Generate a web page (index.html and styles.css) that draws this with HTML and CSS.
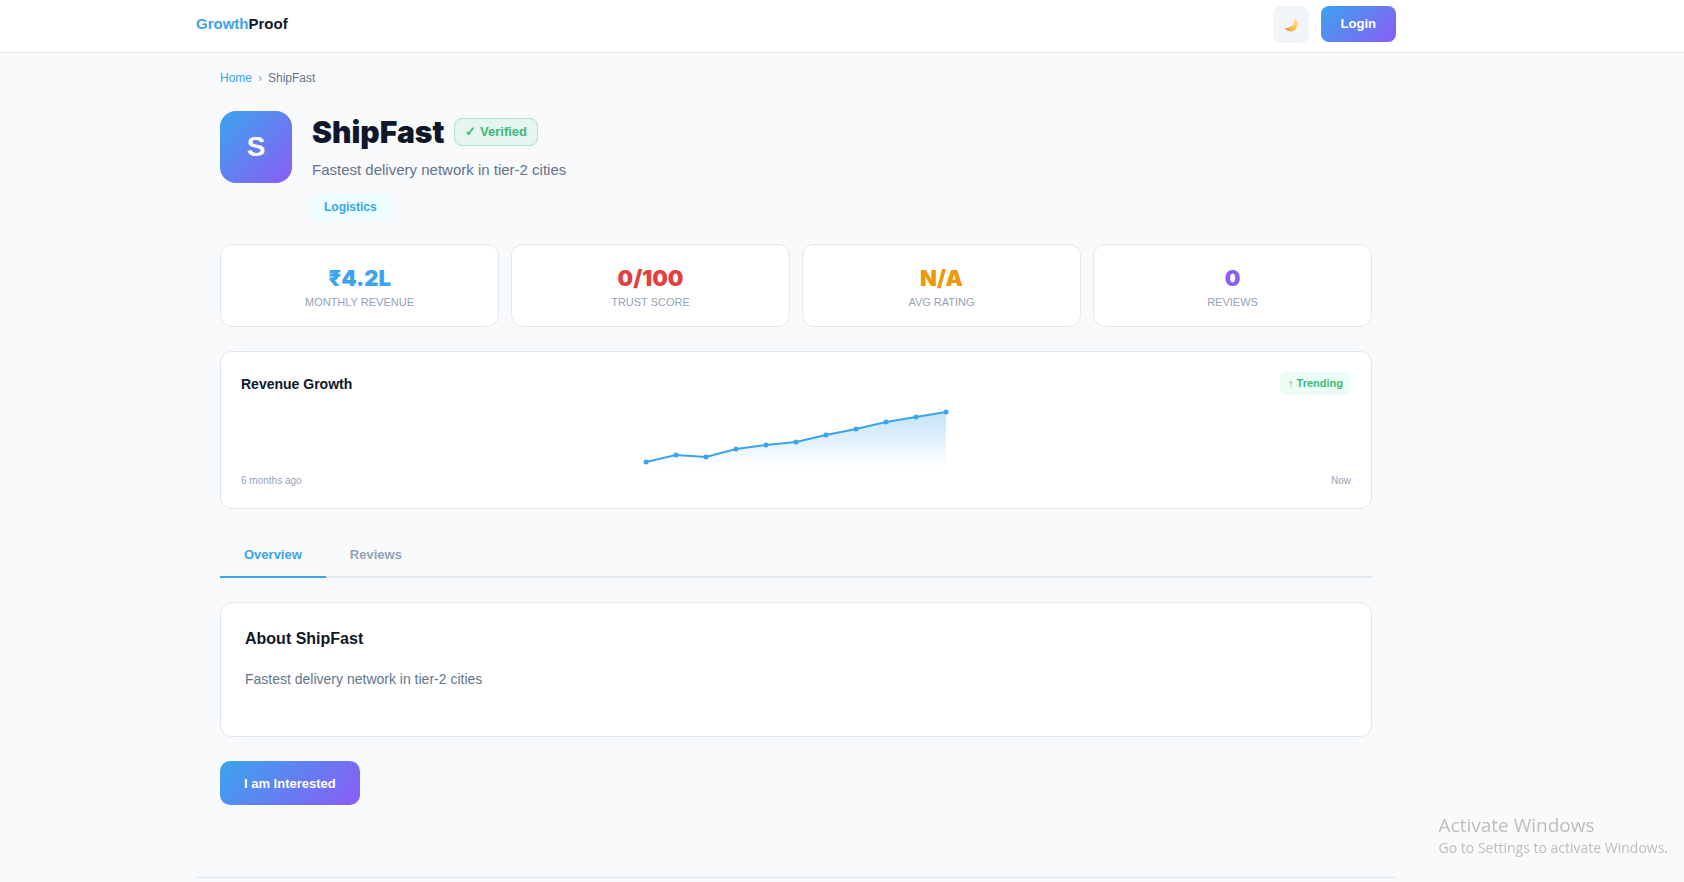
FILE: index.html
```html
<!DOCTYPE html>
<html lang="en">
<head>
<meta charset="utf-8">
<meta name="viewport" content="width=device-width, initial-scale=1">
<title>ShipFast – GrowthProof</title>
<link rel="stylesheet" href="styles.css">
</head>
<body>
<header class="topbar">
  <div class="topbar-inner">
    <a class="brand" href="#"><span class="brand-accent">Growth</span>Proof</a>
    <div class="topbar-actions">
      <button class="theme-toggle" type="button" aria-label="Toggle dark mode">
        <svg class="moon" viewBox="0 0 14 14" aria-hidden="true">
          <defs>
            <linearGradient id="moonFill" x1="1" y1="0" x2="0" y2="1">
              <stop offset="0" stop-color="#fbe0a0"/>
              <stop offset="0.5" stop-color="#f9c54e"/>
              <stop offset="1" stop-color="#e8883a"/>
            </linearGradient>
          </defs>
          <path d="M10.3 0.6C12.4 1.6 13.6 3.6 13.6 6.2C13.6 10.4 10.6 13.4 6.6 13.4C4 13.4 1.7 12.2 0.5 9.6C2 10.1 3.6 10 5.4 9.300C8.400 8.200 10.300 5.800 10.500 2.800C10.600 2 10.500 1.200 10.300 0.600Z" fill="url(#moonFill)"/>
        </svg>
      </button>
      <button class="btn btn-login" type="button">Login</button>
    </div>
  </div>
</header>

<main class="page">
  <nav class="breadcrumb" aria-label="Breadcrumb">
    <a href="#">Home</a><span class="sep">›</span><span>ShipFast</span>
  </nav>

  <section class="profile">
    <div class="avatar">S</div>
    <div class="profile-body">
      <div class="title-row">
        <h1>ShipFast</h1>
        <span class="verified">✓ Verified</span>
      </div>
      <p class="tagline">Fastest delivery network in tier-2 cities</p>
      <span class="category">Logistics</span>
    </div>
  </section>

  <section class="stats">
    <div class="card stat"><div class="value blue">₹4.2L</div><div class="label">Monthly Revenue</div></div>
    <div class="card stat"><div class="value red">0/100</div><div class="label">Trust Score</div></div>
    <div class="card stat"><div class="value amber">N/A</div><div class="label">Avg Rating</div></div>
    <div class="card stat"><div class="value violet">0</div><div class="label">Reviews</div></div>
  </section>

  <section class="card growth">
    <div class="growth-head">
      <h2>Revenue Growth</h2>
      <span class="trend">↑ Trending</span>
    </div>
    <svg class="chart" viewBox="0 0 300 60" role="img" aria-label="Revenue growth line chart">
      <defs>
        <linearGradient id="area" x1="0" y1="0" x2="0" y2="1">
          <stop offset="0" stop-color="#3ba4ec" stop-opacity="0.3"/>
          <stop offset="1" stop-color="#3ba4ec" stop-opacity="0"/>
        </linearGradient>
      </defs>
      <polygon fill="url(#area)" points="0,55 30,48 60,50 90,42 120,38 150,35 180,28 210,22 240,15 270,10 300,5 300,60 0,60"/>
      <polyline class="line" points="0,55 30,48 60,50 90,42 120,38 150,35 180,28 210,22 240,15 270,10 300,5"/>
      <g class="dots">
        <circle cx="0" cy="55" r="2.500"/><circle cx="30" cy="48" r="2.500"/><circle cx="60" cy="50" r="2.500"/>
        <circle cx="90" cy="42" r="2.500"/><circle cx="120" cy="38" r="2.500"/><circle cx="150" cy="35" r="2.500"/>
        <circle cx="180" cy="28" r="2.500"/><circle cx="210" cy="22" r="2.500"/><circle cx="240" cy="15" r="2.500"/>
        <circle cx="270" cy="10" r="2.500"/><circle cx="300" cy="5" r="2.500"/>
      </g>
    </svg>
    <div class="axis"><span>6 months ago</span><span>Now</span></div>
  </section>

  <div class="tabs" role="tablist">
    <button class="tab active" type="button" role="tab" aria-selected="true">Overview</button>
    <button class="tab" type="button" role="tab" aria-selected="false">Reviews</button>
  </div>

  <section class="card about">
    <h2>About ShipFast</h2>
    <p>Fastest delivery network in tier-2 cities</p>
  </section>

  <button class="btn btn-interest" type="button">I am Interested</button>
</main>

<footer class="footer"></footer>

<aside class="activation">
  <div class="activation-title">Activate Windows</div>
  <div class="activation-text">Go to Settings to activate Windows.</div>
</aside>
</body>
</html>
```

FILE: styles.css
```css
:root {
  --blue: #3ba4ec;
  --violet: #8b5cf6;
  --ink: #0f172a;
  --slate: #64748b;
  --muted: #94a3b8;
  --line: #e2e8f0;
  --gradient: linear-gradient(135deg, #3ba4ec, #8b5cf6);
  --gutter: 92px;
}

* { box-sizing: border-box; }

body {
  margin: 0;
  min-height: 100vh;
  overflow-x: hidden;
  background: #f9fafc;
  color: var(--ink);
  font-family: "Liberation Sans", Arial, sans-serif;
  font-size: 14px;
}

h1, h2, p { margin: 0; }
a { color: inherit; text-decoration: none; }
button { font-family: inherit; border: 0; cursor: pointer; }

.topbar {
  padding: 6px var(--gutter) 9px 0;
  background: #fff;
  border-bottom: 1px solid var(--line);
}
.topbar-inner {
  display: flex;
  justify-content: space-between;
  align-items: flex-start;
  max-width: 1200px;
  margin: 0 auto;
}
.brand { font-size: 15px; font-weight: 700; line-height: 36px; }
.brand-accent { color: var(--blue); }
.topbar-actions { display: flex; gap: 12px; }

.theme-toggle {
  display: grid;
  place-items: center;
  width: 36px;
  height: 37px;
  padding: 0;
  border-radius: 8px;
  background: #f1f5f9;
}
.moon { width: 14px; height: 14px; }

.btn {
  background: var(--gradient);
  color: #fff;
  font-size: 13px;
  font-weight: 700;
}
.btn-login { height: 36px; padding: 0 20px 2px; border-radius: 8px; }
.btn-interest { height: 44px; margin-top: 24px; padding: 0 24px; border-radius: 10px; }

.page {
  width: calc(100% - var(--gutter));
  max-width: 1292px;
  padding: 16px 24px 72px;
}
@media (min-width: 1292px) {
  .page {
    max-width: 1200px;
    margin-left: calc((100% - var(--gutter) - 1200px) / 2);
  }
}

.breadcrumb {
  display: flex;
  gap: 6px;
  color: var(--slate);
  font-size: 12px;
  line-height: 18px;
}
.breadcrumb a { color: var(--blue); }
.sep { color: var(--muted); }

.profile { display: flex; gap: 20px; margin-top: 24px; }
.avatar {
  display: grid;
  place-items: center;
  flex: none;
  width: 72px;
  height: 72px;
  border-radius: 16px;
  background: var(--gradient);
  color: #fff;
  font-size: 28px;
  font-weight: 700;
}
.title-row { display: flex; align-items: center; gap: 10px; height: 42px; }
h1 {
  font-family: "Arial Black", Inter, sans-serif;
  font-size: 30px;
  font-weight: 900;
  line-height: 42px;
}
.verified {
  padding: 0 10px;
  border: 1px solid #b3e2cb;
  border-radius: 8px;
  background: #e4f4ee;
  color: #3cb97d;
  font-size: 13px;
  font-weight: 700;
  line-height: 26px;
}
.tagline { margin-top: 6px; color: var(--slate); font-size: 15px; line-height: 22px; }
.category {
  display: inline-block;
  margin-top: 13px;
  padding: 0 12px;
  border-radius: 6px;
  background: #ecfeff;
  color: var(--blue);
  font-size: 12px;
  font-weight: 700;
  line-height: 26px;
}

.card { background: #fff; border: 1px solid var(--line); border-radius: 12px; }

.stats {
  display: grid;
  grid-template-columns: repeat(4, 1fr);
  gap: 12px;
  margin-top: 24px;
}
.stat { padding: 18px 16px 16px; text-align: center; }
.value {
  font-family: "Arial Black", Inter, sans-serif;
  font-size: 22px;
  font-weight: 900;
  line-height: 31px;
}
.label { color: var(--muted); font-size: 11px; line-height: 16px; text-transform: uppercase; }
.blue { color: var(--blue); }
.red { color: #e53e3e; }
.amber { color: #ed9a09; }
.violet { color: var(--violet); }

.growth { margin-top: 24px; padding: 20px; }
.growth-head { display: flex; justify-content: space-between; align-items: center; }
.growth h2 { font-size: 14px; }
.trend {
  padding: 0 8px;
  border-radius: 6px;
  background: #ecfdf5;
  color: #3cb97d;
  font-size: 11px;
  font-weight: 700;
  line-height: 23px;
}
.chart { display: block; width: 100%; height: 60px; margin-top: 12px; }
.line { fill: none; stroke: var(--blue); stroke-width: 2; }
.dots { fill: var(--blue); }
.axis {
  display: flex;
  justify-content: space-between;
  margin-top: 6px;
  color: var(--muted);
  font-size: 10px;
  line-height: 15px;
}

.tabs { display: flex; margin-top: 24px; box-shadow: inset 0 -2px var(--line); }
.tab {
  padding: 13px 24px;
  border-bottom: 2px solid transparent;
  background: none;
  color: var(--muted);
  font-size: 13px;
  font-weight: 700;
  line-height: 17px;
}
.tab.active { color: var(--blue); border-color: var(--blue); }

.about { margin-top: 24px; padding: 24px 24px 44px; }
.about h2 { font-size: 16px; line-height: 24px; }
.about p { margin-top: 16px; color: var(--slate); font-size: 14px; line-height: 25px; }

.footer {
  width: calc(100% - var(--gutter));
}
.footer::before {
  content: "";
  display: block;
  max-width: 1200px;
  margin: 0 auto;
  border-top: 1px solid var(--line);
}

.activation {
  position: fixed;
  right: 16px;
  bottom: 24px;
  color: #bcbec0;
  font-family: "Segoe UI", "Open Sans", sans-serif;
  pointer-events: none;
}
.activation-title { font-size: 19px; line-height: 25px; }
.activation-text { font-size: 14px; line-height: 20px; }
```
